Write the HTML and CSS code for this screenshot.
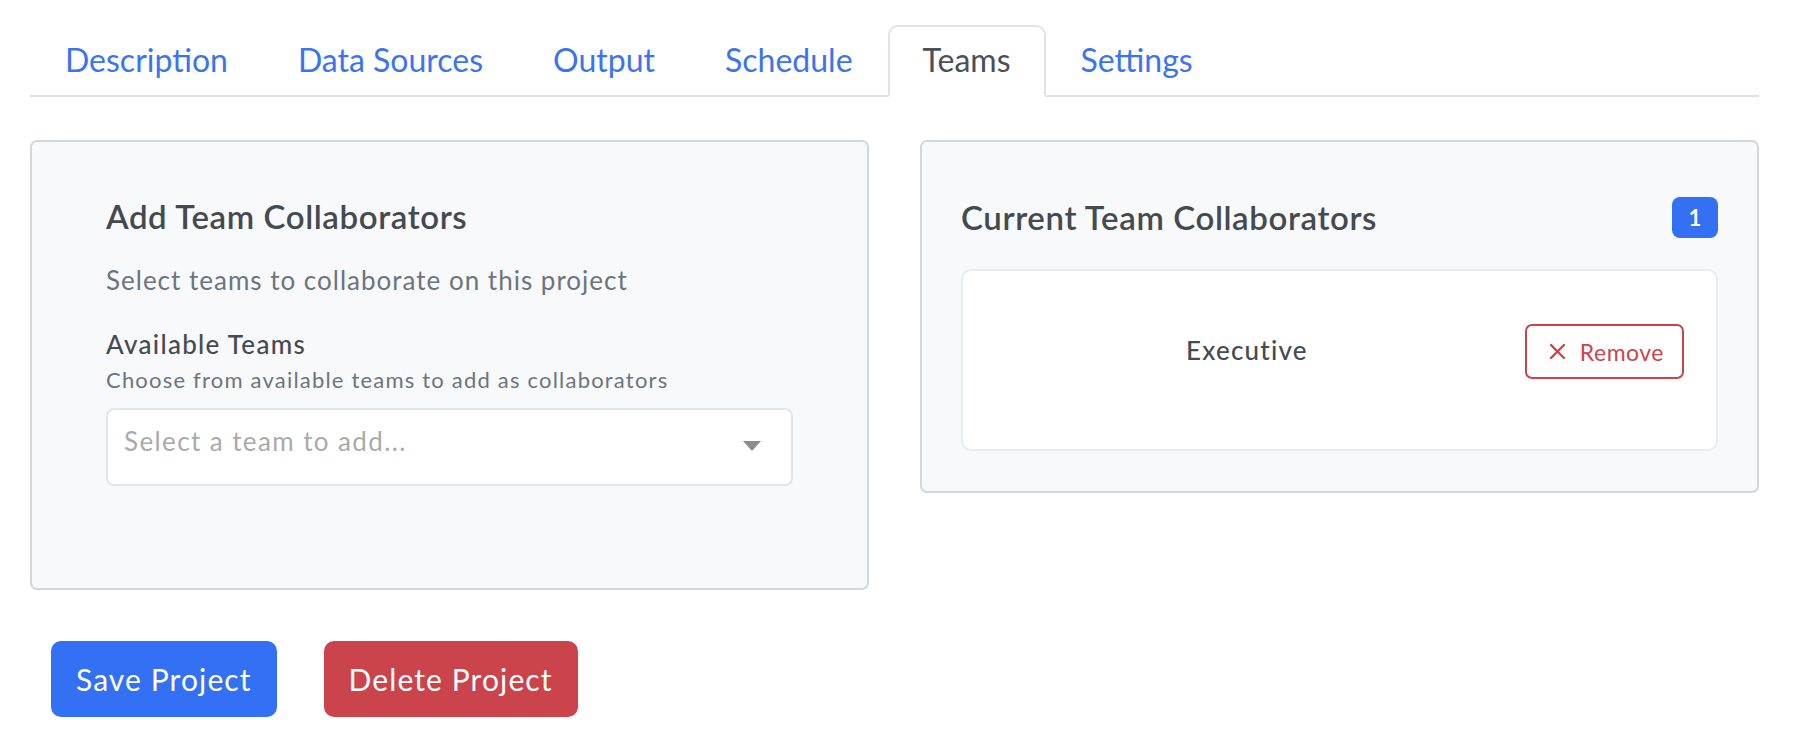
FILE: index.html
```html
<!doctype html>
<html lang="en">
<head>
    <meta charset="UTF-8">
    <meta name="viewport" content="width=device-width, initial-scale=1.0">
    <title>Project - Teams</title>
    <link rel="stylesheet" href="styles.css">
</head>
<body>
<div class="page">
    <ul class="tabs">
        <li class="tabs__item"><a class="tabs__link" href="#">Description</a></li>
        <li class="tabs__item"><a class="tabs__link" href="#">Data Sources</a></li>
        <li class="tabs__item"><a class="tabs__link" href="#">Output</a></li>
        <li class="tabs__item"><a class="tabs__link" href="#">Schedule</a></li>
        <li class="tabs__item"><a class="tabs__link is-active" href="#">Teams</a></li>
        <li class="tabs__item"><a class="tabs__link" href="#">Settings</a></li>
    </ul>

    <div class="panels">
        <section class="panel panel--add">
            <h2 class="panel__title">Add Team Collaborators</h2>
            <p class="panel__lead">Select teams to collaborate on this project</p>
            <label class="field__label">Available Teams</label>
            <p class="field__help">Choose from available teams to add as collaborators</p>
            <div class="select">
                <span class="select__placeholder">Select a team to add...</span>
                <svg class="select__caret" width="18" height="10" viewBox="0 0 18 10"><path d="M0 0h18L9 10z" fill="#8c8c8c"/></svg>
            </div>
        </section>

        <section class="panel panel--current">
            <div class="panel__head">
                <h2 class="panel__title">Current Team Collaborators</h2>
                <span class="badge">1</span>
            </div>
            <div class="member">
                <span class="member__name">Executive</span>
                <button class="remove-btn">
                    <svg width="17" height="17" viewBox="0 0 17 17"><path d="M2 2l13 13M15 2L2 15" stroke="currentColor" stroke-width="2.4" stroke-linecap="round"/></svg>
                    <span>Remove</span>
                </button>
            </div>
        </section>
    </div>

    <div class="actions">
        <button class="button button--primary">Save Project</button>
        <button class="button button--danger">Delete Project</button>
    </div>
</div>
</body>
</html>
```

FILE: styles.css
```css
html, body { margin: 0; padding: 0; background: #fff; font-family: Lato, "Open Sans", sans-serif; color: #454b52; }
.page { width: 1729px; margin-left: 30px; padding-top: 25px; }

/* tabs */
.tabs { display: flex; list-style: none; margin: 0; padding: 0; border-bottom: 2px solid #dfe3e8; }
.tabs__link { display: block; margin-bottom: -2px; padding: 14px 33px 16px; border: 2px solid transparent; border-radius: 10px 10px 0 0; font-size: 32px; line-height: 1.2; color: #3b74f1; text-decoration: none; }
.tabs__link.is-active { color: #495057; background: #fff; border-color: #dfe3e8 #dfe3e8 #fff; }

/* panels */
.panels { display: grid; grid-template-columns: 1fr 1fr; gap: 51px; align-items: start; margin-top: 43px; }
.panel { background: #f8f9fa; border: 2px solid #d3d7dc; border-radius: 7px; }
.panel--add { padding: 55px 74px 102px; }
.panel--current { padding: 55px 39px 40px; }
.panel__title { margin: 0; font-size: 33px; line-height: 1.2; font-weight: 600; letter-spacing: 0.6px; color: #454a50; }
.panel__lead { margin: 28px 0 0; font-size: 26px; line-height: 1.2; letter-spacing: 1px; color: #6c757d; }
.field__label { display: block; margin-top: 33px; font-size: 26px; line-height: 1.2; font-weight: 500; letter-spacing: 1.3px; color: #454b52; }
.field__help { margin: 7px 0 0; font-size: 22px; line-height: 1.2; letter-spacing: 1.2px; color: #6c757d; }

.select { display: flex; align-items: center; justify-content: space-between; box-sizing: border-box; height: 78px; margin-top: 14px; padding: 0 30px 10px 16px; background: #fff; border: 2px solid #e3e5e8; border-radius: 8px; }
.select__placeholder { font-size: 26px; line-height: 1.2; letter-spacing: 1.4px; color: #aaaaaa; }
.select__caret { margin-top: 8px; }

.panel__head { display: flex; align-items: center; justify-content: space-between; height: 41px; margin-bottom: 31px; }
.badge { display: flex; align-items: center; justify-content: center; width: 46px; height: 41px; border-radius: 8px; background: #3470f4; color: #fff; font-size: 22px; font-weight: 700; }

.member { display: flex; align-items: center; padding: 53px 32px 70px 30px; background: #fff; border: 2px solid #e9ecef; border-radius: 10px; }
.member__name { flex: 1; margin: -4px 24px 0 0; text-align: center; font-size: 26px; font-weight: 500; letter-spacing: 1.2px; color: #454b52; }
.remove-btn { display: inline-flex; align-items: center; gap: 14px; box-sizing: border-box; height: 55px; padding: 0 18px 0 22px; background: transparent; border: 2px solid #cc444b; border-radius: 7px; color: #cc444b; font-family: inherit; font-size: 23px; letter-spacing: 0.5px; }

/* actions */
.actions { display: flex; gap: 47px; margin-top: 51px; padding-left: 21px; }
.button { height: 76px; padding: 0 25px; border: 0; border-radius: 10px; color: #fff; font-family: inherit; font-size: 30px; font-weight: 400; letter-spacing: 1.1px; }
.button--primary { background: #3470f4; }
.button--danger { background: #cc444b; }
```
